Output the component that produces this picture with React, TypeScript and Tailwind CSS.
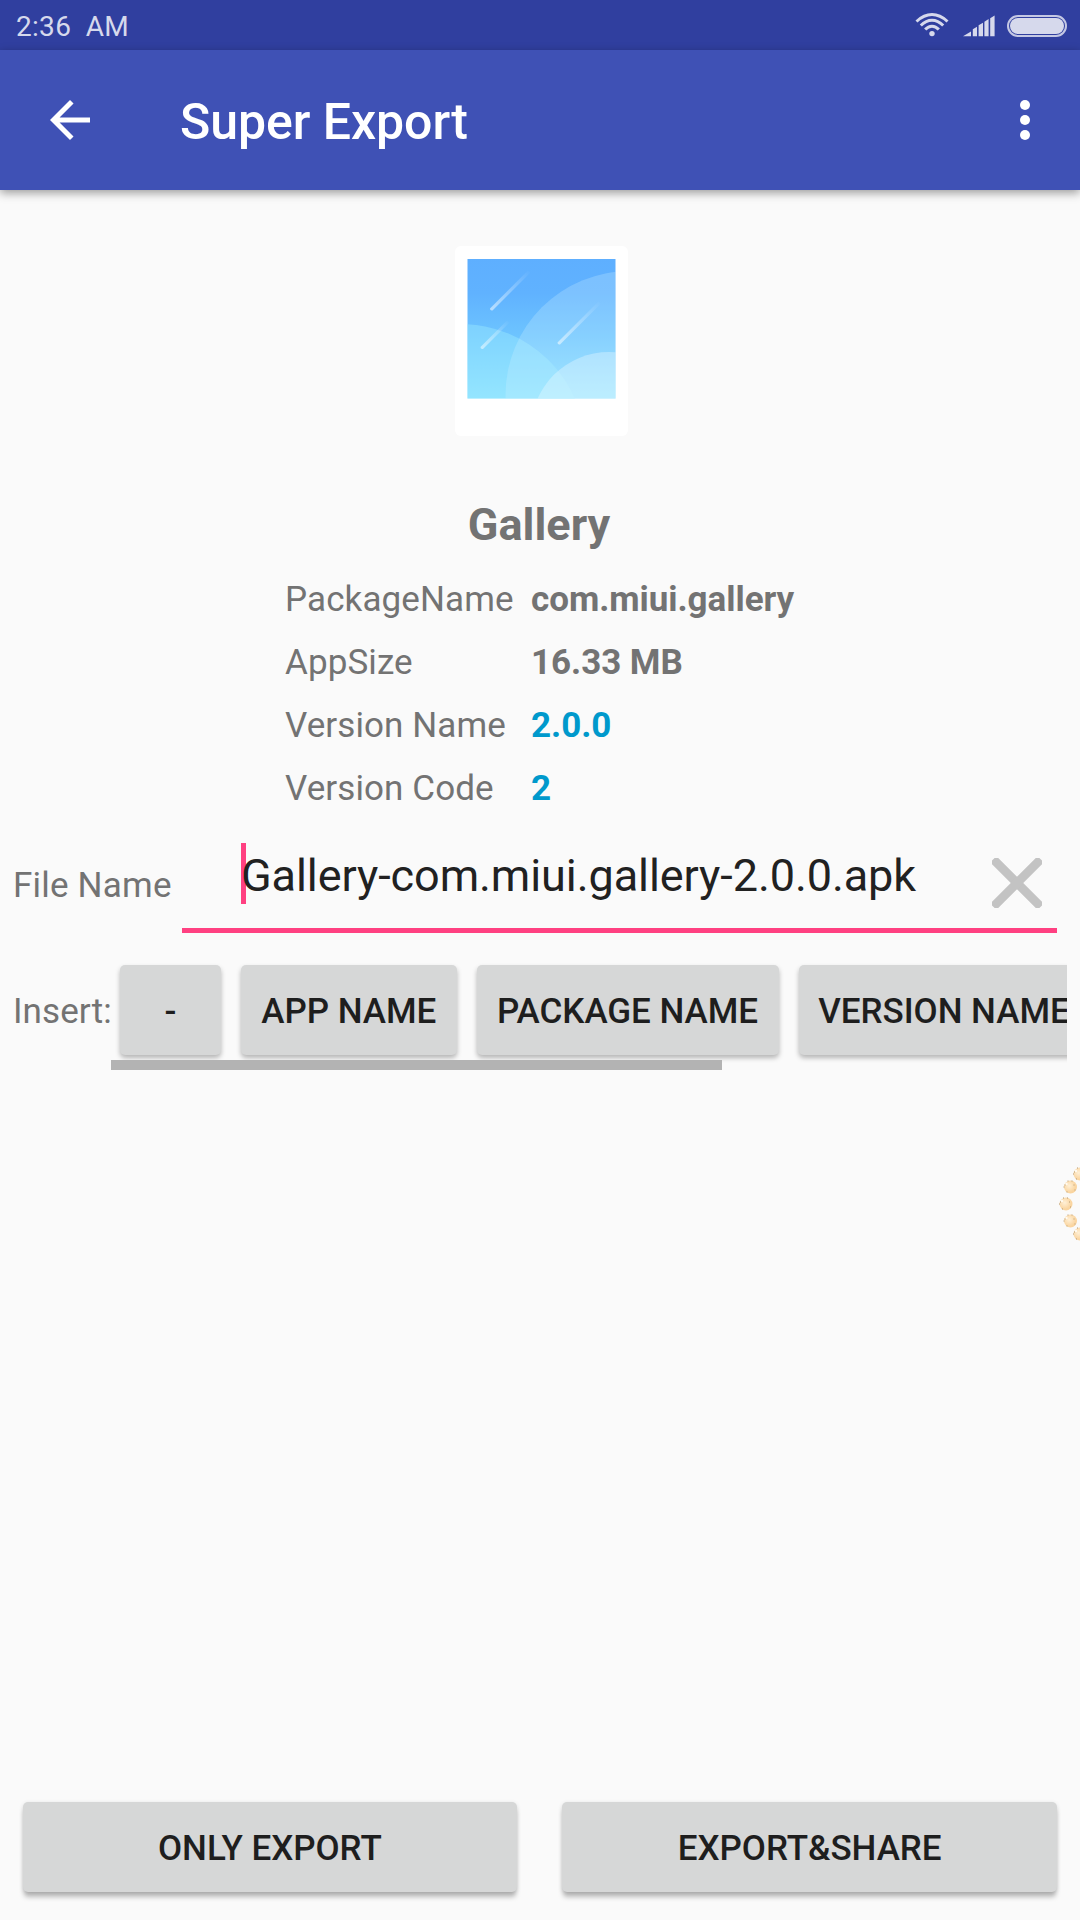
import React from "react";

const details = [
  { label: "PackageName", value: "com.miui.gallery", accent: false },
  { label: "AppSize", value: "16.33 MB", accent: false },
  { label: "Version Name", value: "2.0.0", accent: true },
  { label: "Version Code", value: "2", accent: true },
];

const inserts = [
  { text: "-", width: "w-[101px]" },
  { text: "APP NAME", width: "w-[215.5px]" },
  { text: "PACKAGE NAME", width: "w-[302px]" },
  { text: "VERSION NAME", width: "w-[291px]" },
];

function StatusBar() {
  return (
    <div className="flex h-[50px] items-center justify-between bg-[#303f9f] pr-[13px] pl-4 text-[#d6d9ec]">
      <span className="mt-[3px] text-[28px] leading-[34px] font-normal tracking-[0.3px] whitespace-pre">2:36  AM</span>
      <div className="flex items-center">
        <svg className="mr-[14px]" width="34" height="24" viewBox="0 0 34 24" fill="none" stroke="#d6d9ec" strokeWidth="3">
          <path d="M1.5 8.5Q9 1.6 17 1.6T32.5 8.5" />
          <path d="M5.8 12.5Q11 7.3 17 7.3T28.2 12.5" />
          <path d="M10.2 16.6Q13.2 13.2 17 13.2T23.8 16.6" />
          <circle cx="17" cy="20.6" r="2.7" fill="#d6d9ec" stroke="none" />
        </svg>
        <svg className="mt-0.5 mr-3" width="32" height="22" viewBox="0 0 32 22" fill="#d6d9ec">
          <path d="M0 21.2L8 16.4V21.2Z M9.8 14.3L14 11.7V21.2H9.8Z M15.6 10.3L20 7.7V21.2H15.6Z M21.4 6.8L25.6 4.1V21.2H21.4Z M27.2 3.2L31.6 0.4V21.2H27.2Z" />
        </svg>
        <div className="mt-px h-[22px] w-[60px] rounded-full border-2 border-[#c4c8e4] p-px">
          <div className="h-full w-full rounded-full bg-[#d6d9ec]" />
        </div>
      </div>
    </div>
  );
}

function Toolbar() {
  return (
    <header className="relative flex h-[140px] items-center bg-[#3f51b5] pr-[50px] pl-[50px] text-white shadow-[0_3px_9px_rgba(0,0,0,0.38)]">
      <svg width="40" height="40" viewBox="4 4 16 16" fill="currentColor">
        <path d="M20 11H7.83l5.59-5.59L12 4l-8 8 8 8 1.41-1.41L7.83 13H20v-2z" />
      </svg>
      <h1 className="mt-1 ml-[90px] flex-1 text-[50px] leading-[60px] font-medium tracking-[-0.05px]">Super Export</h1>
      <svg width="10" height="40" viewBox="0 0 10 40" fill="currentColor">
        <circle cx="5" cy="5" r="5" />
        <circle cx="5" cy="20" r="5" />
        <circle cx="5" cy="35" r="5" />
      </svg>
    </header>
  );
}

function GalleryIcon() {
  return (
    <svg width="173" height="190" viewBox="0 0 173 190">
      <defs>
        <linearGradient id="sky" x1="0" y1="0" x2="0" y2="1">
          <stop offset="0" stopColor="#5eafff" />
          <stop offset="0.25" stopColor="#60b2ff" />
          <stop offset="0.55" stopColor="#6dc4ff" />
          <stop offset="1" stopColor="#90e3ff" />
        </linearGradient>
        <linearGradient id="streak" x1="0" y1="1" x2="1" y2="0">
          <stop offset="0" stopColor="#fff" stopOpacity="0.55" />
          <stop offset="1" stopColor="#fff" stopOpacity="0" />
        </linearGradient>
        <clipPath id="photo">
          <rect x="12.5" y="13" width="148" height="139.5" />
        </clipPath>
      </defs>
      <rect width="173" height="190" rx="6" fill="#fff" />
      <g clipPath="url(#photo)">
        <rect x="12" y="12" width="150" height="141" fill="url(#sky)" />
        <circle cx="6" cy="202" r="124" fill="#98e8ff" fillOpacity="0.45" />
        <circle cx="174.5" cy="149" r="124" fill="#d2f2ff" fillOpacity="0.25" />
        <circle cx="154" cy="184" r="78" fill="#f2fcff" fillOpacity="0.34" />
        <g fill="url(#streak)">
          <path d="M35 62.5L73 24.5L75.5 26.5L37.5 64.5Q35 65 35 62.5Z" />
          <path d="M25.5 101L52 74.5L54.5 76.5L28 103Q25.5 103.5 25.5 101Z" />
          <path d="M102.5 96.5L143.5 55.5L146 57.5L105 98.5Q102.5 99 102.5 96.5Z" />
        </g>
      </g>
    </svg>
  );
}

function AssistDots() {
  const dots = [
    [19, 9],
    [9.5, 22],
    [5, 39],
    [9.5, 56],
    [19, 69],
  ];
  return (
    <svg className="absolute top-[1165px] right-0" width="21" height="78" viewBox="-2 0 21 78">
      <defs>
        <radialGradient id="dot" cx="0.4" cy="0.4">
          <stop offset="0" stopColor="#fff0d6" />
          <stop offset="1" stopColor="#fad5a0" />
        </radialGradient>
      </defs>
      {dots.map(([x, y]) => (
        <g key={y}>
          <circle cx={x} cy={y} r="6.5" fill="url(#dot)" />
          <circle cx={x - 4} cy={y - 3} r="1.2" fill="#fffaf0" />
          <path d={`M${x - 6} ${y - 2}h1M${x - 3} ${y - 6}h1M${x + 3} ${y - 2}h1M${x - 7} ${y}h1M${x - 4} ${y + 5}h1M${x + 4} ${y + 3}h1M${x + 1} ${y - 6}h1`} stroke="#b49a74" />
        </g>
      ))}
    </svg>
  );
}

export default function App() {
  return (
    <div className="relative flex h-[1920px] w-[1080px] flex-col overflow-hidden bg-[#fafafa] font-['Roboto',sans-serif] text-[35px] leading-[63px] text-[#737373]">
      <StatusBar />
      <Toolbar />

      <main className="flex flex-1 flex-col">
        <div className="mt-14 flex justify-center pl-[3px]">
          <GalleryIcon />
        </div>
        <h2 className="mt-[59px] pr-0.5 text-center text-[45px] leading-[60px] font-bold">Gallery</h2>
        <dl className="mt-[13px] ml-[285px] grid grid-cols-[246px_auto]">
          {details.map((d) => (
            <React.Fragment key={d.label}>
              <dt className="tracking-[0.1px]">{d.label}</dt>
              <dd className={d.accent ? "font-bold tracking-[-0.05px] text-[#0099cc]" : "font-bold tracking-[-0.05px]"}>{d.value}</dd>
            </React.Fragment>
          ))}
        </dl>

        <div className="flex h-[113px] pl-[13px]">
          <label className="mt-[34px] w-[169px] tracking-[0.2px]">File Name</label>
          <div className="mr-[23px] flex flex-1 border-b-[5px] border-[#ff4081] pl-[59px]">
            <div className="mt-[23px] h-[61px] w-[5px] bg-[#ff4081]" />
            <span className="mt-[26px] -ml-[5px] flex-1 text-[45px] leading-[60px] tracking-[-0.08px] text-[#212121]">
              <span className="relative">Gallery-com.miui.gallery-2.0.0.apk</span>
            </span>
            <svg className="mt-[38px] mr-[15px]" width="50" height="50" viewBox="0 0 50 50" fill="#c3c3c3">
              <rect x="-8.5" y="20.6" width="67" height="8.8" rx="2.5" transform="rotate(45 25 25)" />
              <rect x="-8.5" y="20.6" width="67" height="8.8" rx="2.5" transform="rotate(-45 25 25)" />
            </svg>
          </div>
        </div>

        <div className="flex h-[150px] pr-[13px] pl-[13px]">
          <span className="mt-[47px] w-[98px] tracking-[0.1px]">Insert:</span>
          <div className="flex-1 overflow-hidden pt-8">
            <div className="flex w-max gap-[20px] pl-[9px]">
              {inserts.map((b) => (
                <button
                  key={b.text}
                  className={`${b.width} h-[90px] shrink-0 rounded-[5px] bg-[#d6d7d7] pt-0.5 font-medium tracking-[-0.04px] whitespace-nowrap text-[#1e1e1e] shadow-[0_3px_5px_rgba(0,0,0,0.28)]`}
                >
                  {b.text}
                </button>
              ))}
            </div>
            <div className="relative mt-[5px] h-2.5 w-[611px] bg-[#b3b3b3]" />
          </div>
        </div>

        <div className="mt-auto mb-7 flex gap-[45px] pr-[23px] pl-[22.5px]">
          {["ONLY EXPORT", "EXPORT&SHARE"].map((text) => (
            <button
              key={text}
              className="h-[90px] flex-1 rounded-[5px] bg-[#d6d7d7] pt-0.5 font-medium tracking-[-0.04px] text-[#1e1e1e] shadow-[0_6px_5px_-1px_rgba(0,0,0,0.25),0_1px_4px_rgba(0,0,0,0.12)]"
            >
              {text}
            </button>
          ))}
        </div>
      </main>

      <AssistDots />
    </div>
  );
}
